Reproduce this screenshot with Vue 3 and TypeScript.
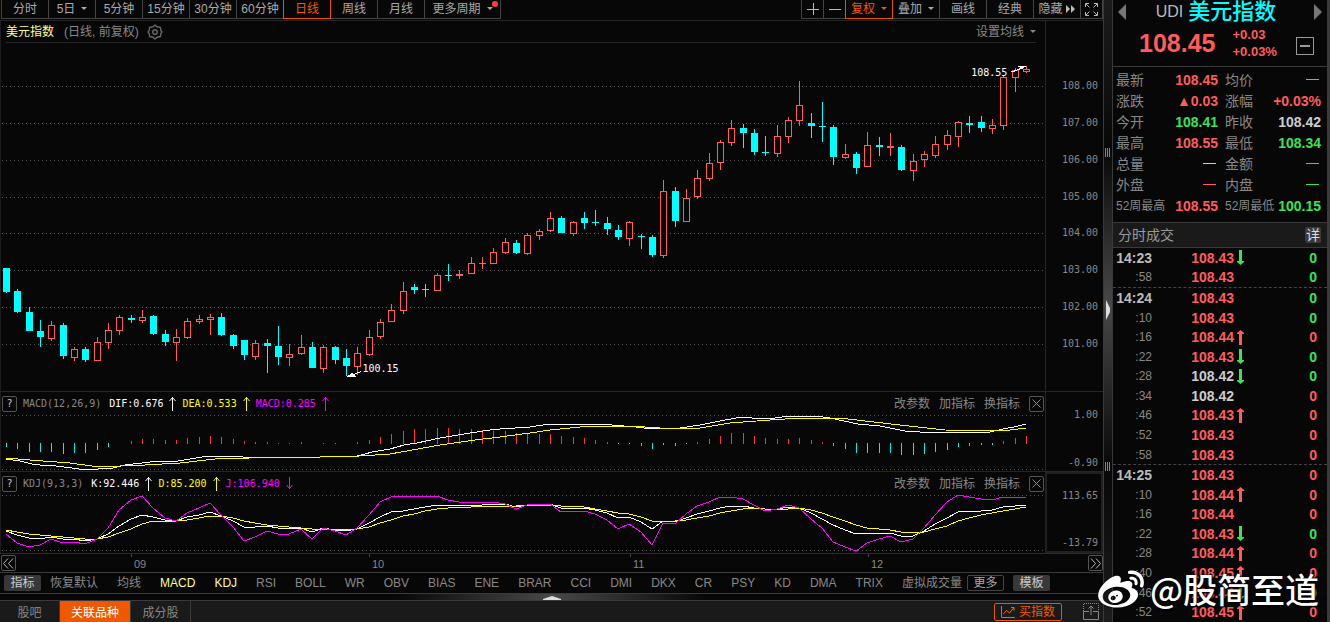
<script setup lang="ts">
type Tone = 'up' | 'down' | 'flat' | 'cyan'
type Candle = [rise: 0 | 1, high: number, top: number, bottom: number, low: number]

interface Trade {
  time: string
  price: string
  tone: Tone
  move: 'rise' | 'fall' | ''
  volume: Tone
}

const periods = ['分时', '5日', '5分钟', '15分钟', '30分钟', '60分钟', '日线', '周线', '月线']
const indicators = [
  'MACD', 'KDJ', 'RSI', 'BOLL', 'WR', 'OBV', 'BIAS', 'ENE', 'BRAR', 'CCI', 'DMI',
  'DKX', 'CR', 'PSY', 'KD', 'DMA', 'TRIX', '虚拟成交量',
]
const priceTicks = ['108.00', '107.00', '106.00', '105.00', '104.00', '103.00', '102.00', '101.00']
const priceGrid = [86, 123, 160, 197, 233, 270, 307, 344]
const months = ['', '09', '10', '11', '12']

const candles: Candle[] = [
  [0, 268, 268, 292, 293], [0, 289, 291, 312, 313], [0, 307, 312, 331, 331], [0, 320, 331, 337, 347],
  [1, 321, 325, 339, 341], [0, 323, 325, 356, 359], [1, 347, 349, 358, 361], [0, 347, 349, 360, 362],
  [1, 337, 342, 361, 361], [1, 323, 330, 343, 349], [1, 315, 317, 331, 335], [0, 315, 318, 320, 323],
  [1, 310, 317, 321, 323], [0, 315, 316, 334, 335], [0, 330, 334, 342, 346], [1, 329, 337, 343, 361],
  [1, 318, 321, 338, 339], [1, 315, 319, 322, 324], [1, 314, 317, 320, 335], [0, 313, 317, 335, 336],
  [0, 334, 335, 346, 349], [0, 340, 340, 355, 360], [1, 340, 343, 357, 360], [0, 339, 343, 346, 373],
  [0, 326, 346, 357, 365], [1, 344, 354, 358, 366], [1, 335, 347, 354, 355], [0, 342, 347, 368, 368],
  [1, 345, 347, 369, 373], [0, 346, 347, 360, 364], [0, 349, 358, 366, 376], [1, 347, 353, 367, 375],
  [1, 330, 337, 355, 356], [1, 319, 322, 337, 339], [1, 304, 310, 322, 322], [1, 282, 291, 311, 314],
  [0, 284, 287, 290, 294], [0, 284, 289, 290, 297], [1, 273, 275, 291, 291], [0, 264, 275, 276, 281],
  [1, 270, 274, 276, 279], [1, 257, 263, 274, 274], [1, 257, 263, 264, 269], [1, 248, 252, 264, 264],
  [1, 238, 242, 253, 254], [0, 240, 243, 253, 254], [1, 233, 235, 254, 255], [1, 229, 231, 236, 240],
  [1, 212, 218, 231, 232], [0, 216, 218, 233, 233], [1, 221, 222, 234, 236], [0, 212, 218, 223, 229],
  [0, 210, 222, 223, 226], [0, 217, 223, 229, 235], [0, 225, 230, 237, 240], [1, 221, 222, 239, 246],
  [0, 234, 236, 237, 249], [0, 235, 237, 255, 257], [1, 180, 191, 256, 258], [0, 187, 191, 221, 227],
  [1, 189, 198, 222, 222], [1, 170, 178, 197, 199], [1, 153, 163, 179, 181], [1, 140, 142, 163, 170],
  [1, 120, 128, 143, 146], [0, 124, 128, 133, 148], [0, 129, 133, 152, 155], [0, 136, 152, 153, 156],
  [1, 125, 136, 154, 157], [1, 117, 120, 137, 143], [1, 81, 105, 121, 126], [0, 113, 123, 126, 138],
  [0, 102, 126, 127, 142], [0, 125, 127, 157, 165], [1, 144, 154, 158, 159], [0, 152, 154, 168, 174],
  [1, 132, 145, 167, 167], [0, 137, 145, 147, 156], [1, 133, 146, 148, 156], [0, 145, 147, 170, 171],
  [1, 154, 161, 171, 181], [1, 151, 154, 160, 167], [1, 136, 144, 156, 158], [1, 130, 135, 145, 150],
  [1, 121, 122, 137, 147], [0, 116, 123, 125, 133], [0, 116, 122, 128, 132], [1, 119, 125, 129, 134],
  [1, 76, 77, 126, 130], [1, 68, 70, 78, 92], [1, 66, 69, 72, 73],
]

const histogram: number[] = [
  -4, -6, -9, -9, -9, -11, -10, -10, -7, -4, 0, 3, 5, 5, 4, 4, 6, 7, 8, 7, 5, 3, 2, 2, 1, 1, 2, 0, 1, 1,
  0, 2, 4, 7, 10, 13, 15, 15, 16, 16, 15, 15, 14, 13, 13, 11, 11, 10, 10, 8, 7, 6, 4, 2, -1, -1, -3, -6,
  -2, -3, -1, 2, 5, 8, 11, 11, 8, 6, 5, 5, 6, 4, 2, -3, -6, -10, -10, -10, -10, -12, -12, -11, -9, -7,
  -4, -3, -2, -2, 3, 6, 8,
]

const difLine =
  '6,459 20,461 32,464 40,465 56,466 72,468 86,470 98,469 113,468 125,465 150,462 178,461 208,456 228,456 243,457 320,457 357,456 365,454 372,452 390,449 404,445 417,443 440,438 470,433 490,430 500,429 530,427 549,424 595,424 612,425 636,427 652,429 662,428 680,428 700,425 720,421 742,417 752,418 775,418 790,416 815,416 830,418 858,424 880,426 905,431 935,433 960,432 990,432 1003,429 1014,427 1026,424'
const deaLine =
  '6,458 30,460 70,463 92,466 120,466 145,465 180,463 215,459 250,458 320,457 360,456 390,454 440,445 475,440 500,437 530,433 550,430 590,426 630,426 660,428 700,428 730,423 770,420 800,418 840,418 865,421 900,425 945,430 990,431 1010,430 1026,428'

const kValues: number[] = [
  531, 535, 538, 539, 537, 539, 539, 541, 539, 534, 526, 519, 515, 517, 520, 521, 517, 515, 512, 516, 521,
  527, 527, 526, 528, 529, 528, 532, 528, 530, 531, 529, 523, 517, 512, 511, 509, 507, 505, 505, 505, 505,
  505, 504, 504, 507, 505, 504, 504, 508, 508, 508, 510, 513, 518, 517, 522, 529, 521, 522, 518, 514, 511,
  508, 506, 506, 508, 509, 509, 507, 508, 513, 519, 525, 530, 534, 533, 533, 533, 536, 536, 531, 524, 518,
  512, 511, 511, 510, 507, 506, 505,
]
const dValues: number[] = [
  530, 532, 534, 535, 536, 537, 538, 539, 539, 537, 533, 529, 524, 521, 521, 521, 520, 518, 516, 516, 518,
  521, 523, 525, 526, 527, 528, 529, 529, 529, 530, 529, 527, 523, 520, 516, 514, 511, 509, 508, 507, 507,
  506, 506, 506, 506, 505, 505, 505, 506, 506, 507, 509, 511, 513, 514, 517, 521, 521, 521, 520, 518, 516,
  513, 511, 509, 508, 509, 509, 509, 508, 510, 513, 517, 521, 525, 528, 529, 530, 532, 533, 532, 529, 526,
  521, 518, 515, 513, 511, 509, 507,
]
const jValues: number[] = [
  534, 543, 547, 545, 539, 543, 542, 544, 539, 528, 510, 500, 496, 508, 518, 521, 513, 508, 503, 515, 527,
  541, 537, 531, 534, 534, 529, 539, 528, 531, 535, 528, 515, 502, 497, 496, 496, 497, 496, 500, 502, 502,
  502, 502, 504, 509, 505, 504, 504, 512, 511, 511, 514, 520, 529, 524, 532, 545, 523, 524, 514, 506, 502,
  497, 497, 499, 505, 511, 509, 505, 508, 519, 528, 542, 547, 551, 543, 539, 536, 542, 539, 528, 515, 502,
  495, 497, 499, 500, 497, 497, 497,
]

const barX = (index: number): number => Math.round(6 + (index * 34) / 3)
const toPoints = (values: number[]): string => values.map((y, i) => `${barX(i)},${y}`).join(' ')

const macdHead = [
  { text: 'DIF:0.676', color: 'white', falls: false },
  { text: 'DEA:0.533', color: 'yellow', falls: false },
  { text: 'MACD:0.285', color: 'magenta', falls: false },
]
const kdjHead = [
  { text: 'K:92.446', color: 'white', falls: false },
  { text: 'D:85.200', color: 'yellow', falls: false },
  { text: 'J:106.940', color: 'magenta', falls: true },
]
const paneActions = ['改参数', '加指标', '换指标']

const quotes: { label: string; value: string; tone: Tone }[] = [
  { label: '最新', value: '108.45', tone: 'up' },
  { label: '均价', value: '', tone: 'down' },
  { label: '涨跌', value: '▲0.03', tone: 'up' },
  { label: '涨幅', value: '+0.03%', tone: 'up' },
  { label: '今开', value: '108.41', tone: 'down' },
  { label: '昨收', value: '108.42', tone: 'flat' },
  { label: '最高', value: '108.55', tone: 'up' },
  { label: '最低', value: '108.34', tone: 'down' },
  { label: '总量', value: '', tone: 'flat' },
  { label: '金额', value: '', tone: 'cyan' },
  { label: '外盘', value: '', tone: 'up' },
  { label: '内盘', value: '', tone: 'down' },
  { label: '52周最高', value: '108.55', tone: 'up' },
  { label: '52周最低', value: '100.15', tone: 'down' },
]

const trade = (time: string, price: string, move: Trade['move'], volume: Tone, tone: Tone = 'up'): Trade => ({
  time, price, move, volume, tone,
})
const trades: Trade[] = [
  trade('14:23', '108.43', 'fall', 'down'),
  trade(':58', '108.43', '', 'down'),
  trade('14:24', '108.43', '', 'down'),
  trade(':10', '108.43', '', 'down'),
  trade(':16', '108.44', 'rise', 'up'),
  trade(':22', '108.43', 'fall', 'down'),
  trade(':28', '108.42', 'fall', 'down', 'flat'),
  trade(':34', '108.42', '', 'up', 'flat'),
  trade(':46', '108.43', 'rise', 'up'),
  trade(':52', '108.43', '', 'up'),
  trade(':58', '108.43', '', 'up'),
  trade('14:25', '108.43', '', 'up'),
  trade(':10', '108.44', 'rise', 'up'),
  trade(':16', '108.44', '', 'up'),
  trade(':22', '108.43', 'fall', 'down'),
  trade(':28', '108.44', 'rise', 'up'),
  trade(':40', '108.45', 'rise', 'up'),
  trade(':46', '108.44', 'fall', 'down'),
  trade(':52', '108.45', 'rise', 'up'),
]
const isMinute = (row: Trade): boolean => row.time.length === 5
const closesMinute = (index: number): boolean => index + 1 < trades.length && isMinute(trades[index + 1])
</script>

<template>
  <div class="terminal">
    <main class="left">
      <header class="toolbar">
        <nav class="group">
          <button v-for="p in periods" :key="p" type="button" class="tool" :class="{ active: p === '日线' }">
            {{ p }}<i v-if="p === '5日'" class="caret"></i>
          </button>
          <button type="button" class="tool more">更多周期<i class="caret"></i><i class="dot"></i></button>
        </nav>
        <div class="group">
          <button type="button" class="tool small" aria-label="放大">
            <svg width="12" height="12" viewBox="0 0 12 12"><path d="M0 6.5H12M6.5 0V12" stroke="#bbb" /></svg>
          </button>
          <button type="button" class="tool small" aria-label="缩小">
            <svg width="12" height="12" viewBox="0 0 12 12"><path d="M0 6.5H12" stroke="#bbb" /></svg>
          </button>
          <button type="button" class="tool active">复权<i class="caret"></i></button>
          <button type="button" class="tool">叠加<i class="caret"></i></button>
          <button type="button" class="tool">画线</button>
          <button type="button" class="tool">经典</button>
          <button type="button" class="tool hide">
            隐藏
            <svg width="10" height="8" viewBox="0 0 10 8"><path d="M0 0L4 4L0 8ZM5 0L9 4L5 8Z" fill="#bbb" /></svg>
          </button>
          <button type="button" class="tool small" aria-label="全屏">
            <svg width="15" height="15" viewBox="0 0 15 15" fill="none" stroke="#bbb">
              <path d="M1.500 5V1.500H5M10 1.500H13.500V5M13.500 10V13.500H10M5 13.500H1.500V10M2 2L5.500 5.500M13 2L9.500 5.500M13 13L9.500 9.500M2 13L5.500 9.500" />
            </svg>
          </button>
        </div>
      </header>

      <section class="pane price">
        <div class="plot">
          <div class="title">
            <strong>美元指数</strong>
            <span>(日线, 前复权)</span>
            <svg width="16" height="16" viewBox="0 0 16 16" fill="none" stroke="#666" stroke-width="1.400">
              <path d="M8 1L10 2.800L13.500 3.500L13.800 6.500L15 8L13.800 9.500L13.500 12.500L10 13.200L8 15L6 13.200L2.500 12.500L2.200 9.500L1 8L2.200 6.500L2.500 3.500L6 2.800Z" stroke-linejoin="round" />
              <circle cx="8" cy="8" r="2.300" />
            </svg>
            <button type="button" class="plain average">设置均线<i class="caret"></i></button>
          </div>
          <div class="canvas">
            <svg class="chart" viewBox="1 43 1044 348" preserveAspectRatio="none" shape-rendering="crispEdges">
              <line v-for="y in priceGrid" :key="y" class="grid" x1="2" x2="1045" :y1="y + 0.5" :y2="y + 0.5" />
              <g v-for="(c, i) in candles" :key="i" :class="c[0] ? 'rise' : 'fall'">
                <rect class="solid" :x="barX(i)" :y="c[1]" width="1" :height="c[4] - c[1]" />
                <rect class="solid" :x="barX(i) - 3" :y="c[2]" width="7" :height="c[3] - c[2]" />
                <rect
                  v-if="c[0] && c[3] - c[2] > 2"
                  class="hollow"
                  :x="barX(i) - 2"
                  :y="c[2] + 1"
                  width="5"
                  :height="c[3] - c[2] - 2"
                />
              </g>
              <g fill="#fff" stroke="#fff">
                <path d="M1011.500 71.500H1014L1023 67.500M1019 66.500H1025L1022 68.500Z" />
                <path d="M361 371.500L349 376.500M348 376.500L352 373.500L355 376.500Z" />
              </g>
            </svg>
            <span class="mark high">108.55</span>
            <span class="mark low">100.15</span>
          </div>
        </div>
        <div class="axis">
          <span v-for="t in priceTicks" :key="t">{{ t }}</span>
        </div>
      </section>

      <section class="pane macd">
        <div class="plot">
          <div class="legend">
            <button type="button" class="box" aria-label="MACD 说明">?</button>
            <span class="name">MACD(12,26,9)</span>
            <template v-for="h in macdHead" :key="h.text">
              <span :class="h.color">{{ h.text }}</span>
              <svg :class="h.color" width="7" height="15" viewBox="0 0 7 15">
                <path d="M3.500 15V1M0.500 5L3.500 1.500L6.500 5" fill="none" stroke="currentColor" />
              </svg>
            </template>
            <div class="actions">
              <button v-for="a in paneActions" :key="a" type="button" class="plain">{{ a }}</button>
              <button type="button" class="box" aria-label="关闭 MACD">
                <svg width="9" height="9" viewBox="0 0 9 9"><path d="M0.500 0.500L8.500 8.500M8.500 0.500L0.500 8.500" stroke="#888" /></svg>
              </button>
            </div>
          </div>
          <div class="canvas">
            <svg class="chart" viewBox="1 415 1044 56" preserveAspectRatio="none" shape-rendering="crispEdges">
              <line class="grid" x1="2" x2="1045" y1="415.500" y2="415.500" />
              <line class="grid" x1="2" x2="1045" y1="469.500" y2="469.500" />
              <rect
                v-for="(h, i) in histogram"
                :key="i"
                :x="barX(i)"
                :y="h > 0 ? 444 - h : 443"
                width="1"
                :height="Math.abs(h)"
                :fill="h > 0 ? '#f33' : '#0ee'"
              />
              <polyline class="curve white" :points="difLine" />
              <polyline class="curve yellow" :points="deaLine" />
            </svg>
          </div>
        </div>
        <div class="axis"><span>1.00</span><span>-0.90</span></div>
      </section>

      <section class="pane kdj">
        <div class="plot">
          <div class="legend">
            <button type="button" class="box" aria-label="KDJ 说明">?</button>
            <span class="name">KDJ(9,3,3)</span>
            <template v-for="h in kdjHead" :key="h.text">
              <span :class="h.color">{{ h.text }}</span>
              <svg :class="h.color" width="7" height="15" viewBox="0 0 7 15">
                <path
                  :d="h.falls ? 'M3.500 1V13M0.500 9L3.500 12.500L6.500 9' : 'M3.500 15V1M0.500 5L3.500 1.500L6.500 5'"
                  fill="none"
                  stroke="currentColor"
                />
              </svg>
            </template>
            <div class="actions">
              <button v-for="a in paneActions" :key="a" type="button" class="plain">{{ a }}</button>
              <button type="button" class="box" aria-label="关闭 KDJ">
                <svg width="9" height="9" viewBox="0 0 9 9"><path d="M0.500 0.500L8.500 8.500M8.500 0.500L0.500 8.500" stroke="#888" /></svg>
              </button>
            </div>
          </div>
          <div class="canvas">
            <svg class="chart" viewBox="1 495 1044 58" preserveAspectRatio="none" shape-rendering="crispEdges">
              <line class="grid" x1="2" x2="1045" y1="495.500" y2="495.500" />
              <line class="grid" x1="2" x2="1045" y1="550.500" y2="550.500" />
              <polyline class="curve white" :points="toPoints(kValues)" />
              <polyline class="curve yellow" :points="toPoints(dValues)" />
              <polyline class="curve magenta" :points="toPoints(jValues)" />
            </svg>
          </div>
        </div>
        <div class="axis framed"><span>113.65</span><span>-13.79</span></div>
      </section>

      <div class="timeline">
        <div class="months">
          <div v-for="m in months" :key="m" class="month">
            <button v-if="!m" type="button" class="box" aria-label="向前">
              <svg width="11" height="11" viewBox="0 0 11 11" fill="none" stroke="#bbb"><path d="M5 0.500L0.500 5.500L5 10.500M10 0.500L5.500 5.500L10 10.500" /></svg>
            </button>
            <span v-else>{{ m }}</span>
          </div>
        </div>
        <button type="button" class="box" aria-label="向后">
          <svg width="11" height="11" viewBox="0 0 11 11" fill="none" stroke="#bbb"><path d="M1 0.500L5.500 5.500L1 10.500M6 0.500L10.500 5.500L6 10.500" /></svg>
        </button>
      </div>

      <nav class="indicators">
        <button type="button" class="chip">指标</button>
        <button type="button" class="plain reset">恢复默认</button>
        <button type="button" class="plain">均线</button>
        <button v-for="n in indicators" :key="n" type="button" class="plain" :class="{ on: n === 'MACD' || n === 'KDJ' }">{{ n }}</button>
        <button type="button" class="chip outline">更多</button>
        <button type="button" class="chip">模板</button>
      </nav>

      <div class="fold">
        <svg width="18" height="4" viewBox="0 0 18 4"><path d="M0 4V3L6 1L9 0L12 1L18 3V4Z" fill="#ddd" /></svg>
      </div>

      <footer class="tabs">
        <button type="button" class="tab">股吧</button>
        <button type="button" class="tab current">关联品种</button>
        <button type="button" class="tab">成分股</button>
        <button type="button" class="buy">
          <svg width="14" height="12" viewBox="0 0 14 12" fill="none" stroke="#f60"><path d="M0.500 0V11.500H14M2.500 8L5.500 4.500L8.500 7L13 1.500M10 1.500H13V4.500" /></svg>
          买指数
        </button>
        <button type="button" class="plain expand" aria-label="展开">
          <svg width="16" height="17" viewBox="0 0 16 17" fill="none" stroke="#888">
            <path d="M0.500 8.500H6M10 8.500H15.500V16.500H0.500V8.500M8 12V3M5.500 5.500L8 3L10.500 5.500" />
            <path d="M0.500 8V0.500H15.500V8" stroke-dasharray="1 1" />
          </svg>
        </button>
      </footer>
    </main>

    <div class="splitter">
      <i class="grip"></i>
      <svg width="5" height="20" viewBox="0 0 5 20"><path d="M0 0L4 8V12L0 20Z" fill="#ddd" /></svg>
      <i class="grip"></i>
    </div>

    <aside class="right">
      <header class="stock">
        <button type="button" class="plain" aria-label="上一个">
          <svg width="8" height="16" viewBox="0 0 8 16"><path d="M8 0V16L0 8Z" fill="#777" /></svg>
        </button>
        <h1><small>UDI</small>美元指数</h1>
        <button type="button" class="plain" aria-label="下一个">
          <svg width="8" height="16" viewBox="0 0 8 16"><path d="M0 0V16L8 8Z" fill="#777" /></svg>
        </button>
      </header>
      <div class="latest">
        <b class="last">108.45</b>
        <div class="change"><span>+0.03</span><span>+0.03%</span></div>
        <button type="button" class="minus" aria-label="移除自选"><i></i></button>
      </div>
      <dl class="quotes">
        <div v-for="q in quotes" :key="q.label">
          <dt :class="{ long: q.label.length > 2 }">{{ q.label }}</dt>
          <dd :class="q.tone"><template v-if="q.value">{{ q.value }}</template><i v-else class="dash"></i></dd>
        </div>
      </dl>
      <div class="section">
        <h2>分时成交</h2>
        <button type="button">详</button>
      </div>
      <table class="trades">
        <tbody>
          <tr v-for="(t, i) in trades" :key="i" :class="{ split: closesMinute(i) }">
            <td class="time" :class="{ minute: isMinute(t) }">{{ t.time }}</td>
            <td class="deal" :class="t.tone">{{ t.price }}</td>
            <td class="move">
              <svg v-if="t.move === 'rise'" width="7" height="15" viewBox="0 0 7 15"><path d="M2 15V4H0V3L3.500 0L7 3V4H5V15Z" fill="#ff5c5c" /></svg>
              <svg v-if="t.move === 'fall'" width="7" height="15" viewBox="0 0 7 15"><path d="M2 0V11H0V12L3.500 15L7 12V11H5V0Z" fill="#3ce05a" /></svg>
            </td>
            <td class="volume" :class="t.volume">0</td>
          </tr>
        </tbody>
      </table>
    </aside>

    <div class="signature">
      <svg width="46" height="42" viewBox="0 1 24 22" fill="#fff">
        <path d="M10.098 20.323c-3.977.391-7.414-1.406-7.672-4.02-.259-2.609 2.759-5.047 6.74-5.441 3.979-.394 7.413 1.404 7.671 4.018.259 2.6-2.759 5.049-6.737 5.439l-.002.004zM9.05 17.219c-.384.616-1.208.884-1.829.602-.612-.279-.793-.991-.406-1.593.379-.595 1.176-.861 1.793-.601.622.263.82.972.442 1.592zm1.27-1.627c-.141.237-.449.353-.689.253-.236-.09-.313-.361-.177-.586.138-.227.436-.346.672-.24.239.09.315.36.18.601l.014-.028zm.176-2.719c-1.893-.493-4.033.45-4.857 2.118-.836 1.704-.026 3.591 1.886 4.21 1.983.64 4.318-.341 5.132-2.179.8-1.793-.201-3.642-2.161-4.149zm7.563-1.224c-.346-.105-.57-.18-.405-.615.375-.977.42-1.804 0-2.404-.781-1.112-2.915-1.053-5.364-.03 0 0-.766.331-.571-.271.376-1.217.315-2.224-.27-2.809-1.338-1.337-4.869.045-7.888 3.08C1.309 10.87 0 13.273 0 15.348c0 3.981 5.099 6.395 10.086 6.395 6.536 0 10.888-3.801 10.888-6.82 0-1.822-1.547-2.854-2.915-3.284v.01zm1.908-5.092c-.766-.856-1.908-1.187-2.96-.962-.436.09-.706.511-.616.932.09.42.511.691.932.602.511-.105 1.067.044 1.442.465.376.421.466.977.316 1.473-.136.406.089.856.51.992.405.119.857-.105.992-.512.33-1.021.12-2.178-.646-3.035l.03.045zm2.418-2.195c-1.576-1.757-3.905-2.419-6.054-1.968-.496.104-.812.587-.706 1.081.104.496.586.813 1.082.707 1.532-.331 3.185.15 4.296 1.383 1.112 1.246 1.429 2.943.947 4.416-.165.48.106 1.007.586 1.157.479.165.991-.104 1.157-.586.675-2.088.241-4.478-1.338-6.235l.03.045z" />
      </svg>
      <span>@股简至道</span>
    </div>
  </div>
</template>

<style>
body {
  background: #070707;
}
</style>

<style scoped>
.terminal {
  position: relative;
  display: grid;
  grid-template-columns: minmax(0, 1fr) 8px 218px;
  min-height: 100vh;
  overflow: hidden;
  background: #070707;
  color: #888;
  font: 12px/16px "Liberation Sans", "Noto Sans CJK SC", sans-serif;
}

.terminal *,
.terminal *::before {
  box-sizing: border-box;
}

button {
  display: flex;
  align-items: center;
  justify-content: center;
  margin: 0;
  padding: 0;
  border: 0;
  background: none;
  color: inherit;
  font: inherit;
  white-space: nowrap;
}

svg {
  display: block;
  flex: none;
}

.left {
  display: flex;
  flex-direction: column;
  min-width: 0;
  border-right: 1px solid #3a3a3a;
}

/* toolbar */
.toolbar {
  display: flex;
  justify-content: space-between;
  height: 20px;
  padding-left: 1px;
}

.group {
  display: flex;
  height: 19px;
}

.tool {
  position: relative;
  width: 48px;
  margin-right: -1px;
  border: 1px solid #444;
  border-top: 0;
  color: #aaa;
}

.group:last-child .tool:last-child {
  margin-right: 0;
}

.tool.more {
  width: 77px;
}

.tool.small {
  width: 23px;
}

.tool.hide {
  gap: 3px;
}

.tool.active {
  z-index: 1;
  border-color: #e85400;
  color: #f05a00;
}

.caret {
  flex: none;
  margin: 0 0 1px 6px;
  border: 3px solid transparent;
  border-top-color: currentColor;
  border-bottom: 0;
}

.dot {
  position: absolute;
  top: 1px;
  right: 2px;
  width: 6px;
  height: 6px;
  border-radius: 50%;
  background: #ff4040;
}

/* chart panes */
.pane {
  display: flex;
  border-top: 1px solid #262626;
}

.plot {
  display: flex;
  flex: 1;
  flex-direction: column;
  min-width: 0;
  border-left: 1px solid #1c1c1c;
}

.price {
  flex: 1;
}

.macd {
  height: 80px;
}

.kdj {
  height: 82px;
}

.title {
  display: flex;
  align-items: center;
  height: 22px;
  margin: 0 9px 0 5px;
  border-bottom: 1px solid #262626;
}

.title strong {
  margin-right: 10px;
  color: #ffff9c;
  font-weight: 400;
}

.title span {
  margin-right: 8px;
}

.average {
  margin-left: auto;
}

.canvas {
  position: relative;
  flex: 1;
  min-height: 0;
}

.chart {
  position: absolute;
  width: 100%;
  height: 100%;
}

.grid {
  stroke: #555;
  stroke-dasharray: 1 3;
}

.rise .solid {
  fill: #ff5c5c;
}

.fall .solid {
  fill: #00ffff;
}

.hollow {
  fill: #070707;
}

.curve {
  fill: none;
  stroke: currentColor;
  stroke-width: 1;
}

.white {
  color: #fff;
}

.yellow {
  color: #ff0;
}

.magenta {
  color: #f0f;
}

.mark {
  position: absolute;
  color: #fff;
  font: 10px/12px "DejaVu Sans Mono", monospace;
}

.mark.high {
  top: 7%;
  right: calc(4% - 4px);
}

.mark.low {
  top: 92%;
  left: calc(35% - 4px);
}

.axis {
  display: flex;
  flex-direction: column;
  justify-content: space-between;
  width: 58px;
  padding: 17px 5px 2px 0;
  border-left: 1px solid #262626;
  font: 10px/12px "DejaVu Sans Mono", monospace;
  text-align: right;
}

.price .axis {
  padding: 59px 5px 41px 0;
}

.axis.framed {
  padding: 16px 3px 2px 0;
  border: 2px solid #202020;
}

.legend {
  display: flex;
  flex: none;
  align-items: center;
  gap: 6px;
  height: 23px;
  padding: 0 1px;
  font: 10px/12px "DejaVu Sans Mono", monospace;
}

.name {
  margin-right: 2px;
}

.box {
  flex: none;
  width: 15px;
  height: 16px;
  border: 1px solid #555;
  border-radius: 2px;
  color: #ccc;
}

.actions {
  display: flex;
  align-items: center;
  gap: 9px;
  margin-left: auto;
  font: 12px/16px "Liberation Sans", "Noto Sans CJK SC", sans-serif;
}

/* time axis */
.timeline {
  display: flex;
  align-items: center;
  justify-content: space-between;
  height: 19px;
  border-top: 1px solid #2c2c2c;
  font-size: 11px;
}

.months {
  display: grid;
  flex: 1;
  grid-template-columns: 131fr 238fr 261fr 238fr 220fr;
}

.month {
  position: relative;
  height: 18px;
  padding: 1px 0 0 1px;
  line-height: 18px;
}

.month span {
  padding-left: 2px;
}

.month + .month::before {
  position: absolute;
  top: 0;
  left: 0;
  width: 1px;
  height: 3px;
  background: #444;
  content: "";
}

/* indicator bar */
.indicators {
  display: flex;
  align-items: center;
  gap: 19px;
  height: 21px;
  padding-left: 4px;
  border-top: 1px solid #3a3a3a;
}

.on {
  color: #ffff9c;
}

.chip {
  width: 37px;
  height: 16px;
  border-radius: 2px;
  background: #383838;
  color: #ccc;
}

.chip + .chip,
.chip.outline,
.reset {
  margin-left: -10px;
}

.chip.outline {
  margin-left: -14px;
  border: 1px solid #444;
  background: none;
  color: #aaa;
}

.fold {
  display: flex;
  justify-content: center;
  height: 7px;
  padding-top: 2px;
  border-top: 1px solid #3a3a3a;
  background: linear-gradient(90deg, transparent 36%, #484848 50%, transparent 64%);
}

/* bottom tabs */
.tabs {
  display: flex;
  align-items: stretch;
  height: 22px;
  border-top: 1px solid #3a3a3a;
  background: #1a1a1a;
}

.tab {
  min-width: 60px;
  padding: 2px 11px 0;
  border-right: 1px solid #3a3a3a;
}

.tab.current {
  background: #ee5800;
  color: #fff;
}

.buy {
  gap: 4px;
  width: 68px;
  height: 18px;
  margin: 2px 21px 0 auto;
  border: 1px solid #e85400;
  border-radius: 2px;
  color: #f05a00;
}

.expand {
  margin-right: 4px;
}

/* splitter */
.splitter {
  display: flex;
  flex-direction: column;
  align-items: center;
  justify-content: space-between;
  padding: 148px 0 151px;
  background: linear-gradient(#1c1c1c, #080808 24%, #484848 49%, #080808 75%, #1c1c1c);
}

.grip {
  width: 6px;
  height: 9px;
  background: repeating-linear-gradient(90deg, #888 0 1px, transparent 1px 2px);
}

/* quote panel */
.right {
  display: flex;
  flex-direction: column;
  border: solid #3a3a3a;
  border-width: 0 3px 0 1px;
}

.stock {
  display: flex;
  align-items: center;
  justify-content: space-between;
  height: 24px;
  padding: 0 5px;
}

h1 {
  display: flex;
  align-items: center;
  gap: 5px;
  margin: 0 8px 0 0;
  color: #0ff;
  font-size: 22px;
  font-weight: 500;
  line-height: 24px;
}

h1 small {
  color: #bbb;
  font-size: 16px;
  font-weight: 400;
}

.latest {
  display: flex;
  align-items: center;
  height: 43px;
  padding: 0 13px 5px 26px;
  border-bottom: 1px solid #3a3a3a;
  color: #ff5c5c;
}

.last {
  font-size: 25px;
  line-height: 32px;
}

.change {
  display: flex;
  flex-direction: column;
  margin-left: 17px;
  font-size: 13px;
  font-weight: 700;
  line-height: 17px;
}

.minus {
  width: 18px;
  height: 18px;
  margin: 6px 0 0 auto;
  border: 1px solid #999;
}

.minus i {
  width: 10px;
  height: 2px;
  background: #999;
}

.quotes {
  display: grid;
  grid-template-columns: 102px 96px;
  column-gap: 7px;
  grid-auto-rows: 21px;
  margin: 0;
  padding: 2px 0 6px 3px;
  border-bottom: 1px solid #3a3a3a;
}

.quotes div {
  display: flex;
  align-items: center;
  justify-content: space-between;
}

dt {
  font-size: 14px;
  white-space: nowrap;
}

dt.long {
  font-size: 12px;
}

dd {
  margin: 0;
  font-size: 14px;
  font-weight: 700;
}

.up {
  color: #ff5c5c;
}

.down {
  color: #3ce05a;
}

.flat {
  color: #ccc;
}

.cyan {
  color: #0dd;
}

.dash {
  display: block;
  width: 13px;
  height: 1px;
  margin-right: 2px;
  background: currentColor;
}

.section {
  display: flex;
  align-items: center;
  justify-content: space-between;
  height: 25px;
  padding: 0 6px 0 5px;
  border-bottom: 1px solid #3a3a3a;
  background: #1a1a1a;
}

h2 {
  margin: 0;
  color: #999;
  font-size: 14px;
  font-weight: 400;
}

.section button {
  width: 16px;
  height: 16px;
  border-radius: 2px;
  background: #3a3a3a;
  color: #ddd;
  font-size: 14px;
}

.trades,
.trades tbody {
  display: flex;
  flex: 1;
  flex-direction: column;
}

.trades tr {
  display: grid;
  flex: 1;
  grid-template-columns: 39px 82px 12px 1fr;
  align-items: center;
  padding-right: 10px;
}

.trades tr.split {
  border-bottom: 1px dashed #444;
}

.trades td {
  padding: 0;
  font-size: 14px;
  font-weight: 700;
  text-align: right;
}

.trades .move {
  padding-left: 3px;
}

.trades .time {
  color: #888;
  font-size: 12px;
  font-weight: 400;
}

.trades .minute {
  color: #bbb;
  font-size: 14px;
  font-weight: 700;
}

/* author signature over the lower right corner */
.signature {
  position: absolute;
  right: 11px;
  bottom: 11px;
  display: flex;
  align-items: center;
  gap: 6px;
  color: #fff;
  font: 500 34px/44px "Noto Sans CJK SC", sans-serif;
  text-shadow: 0 0 3px #000, 1px 1px 2px #000;
}

.signature svg {
  filter: drop-shadow(0 0 1px #000);
}
</style>
